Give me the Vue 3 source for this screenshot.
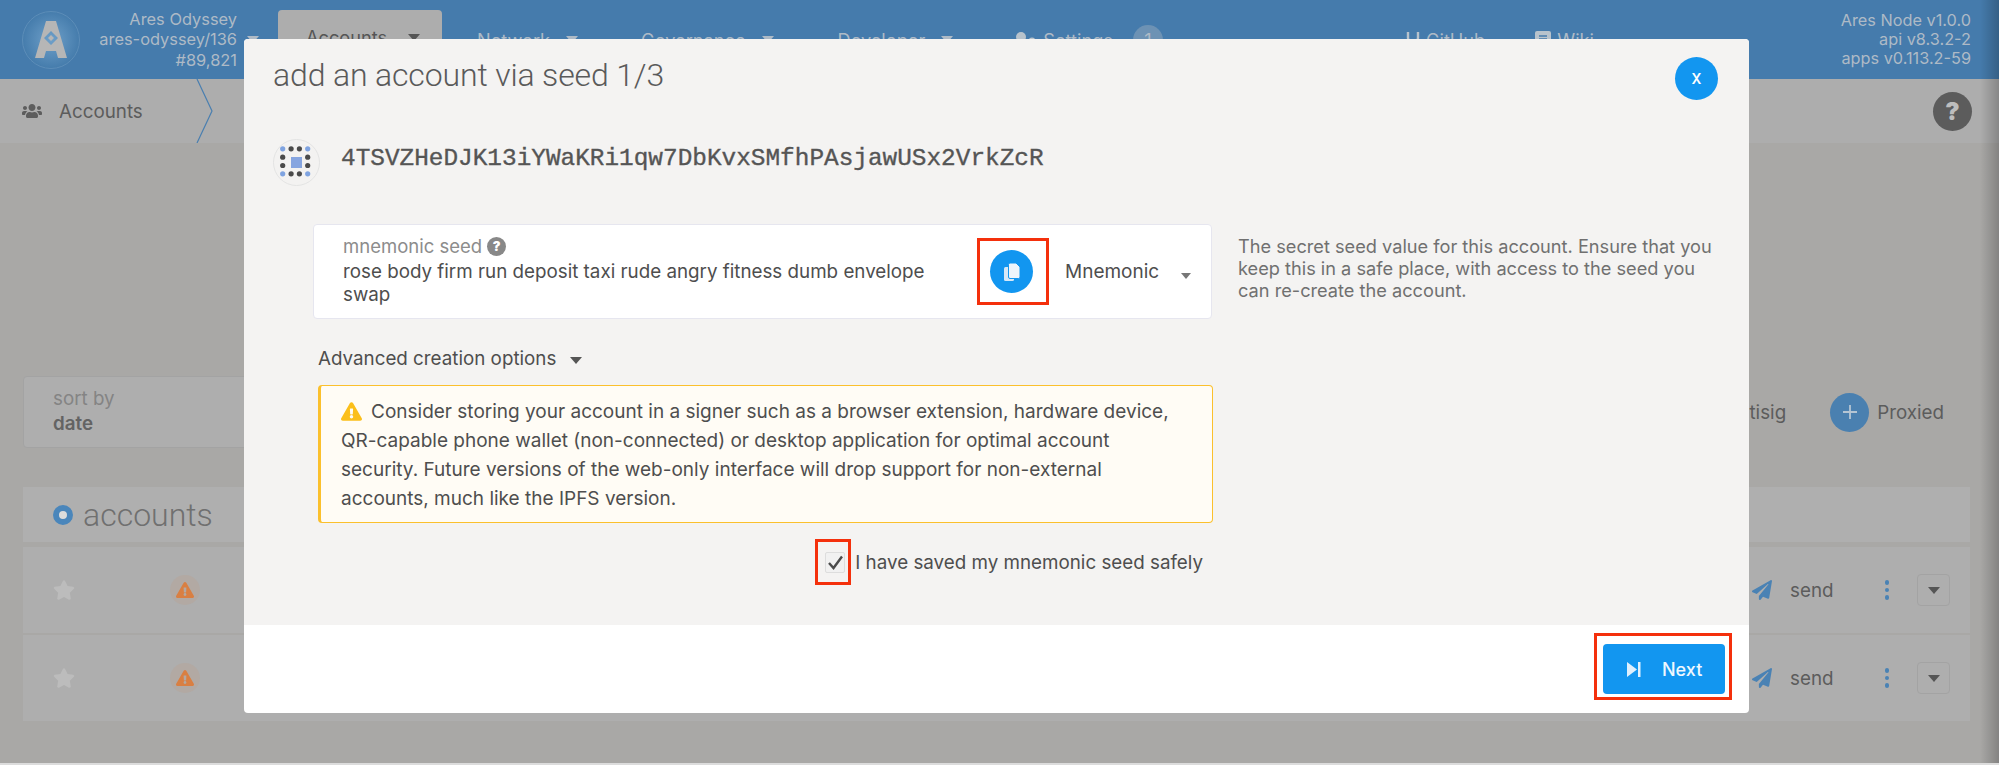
<script setup>
const navItems = [
  { label: 'Network', cls: 'n-network' },
  { label: 'Governance', cls: 'n-gov' },
  { label: 'Developer', cls: 'n-dev' },
]
const rows = [1, 2]
const pos = [0, 8.4, 16.7, 25]
const dots = []
pos.forEach((y, r) => pos.forEach((x, c) => {
  const edgeRow = r === 0 || r === 3
  const edgeCol = c === 0 || c === 3
  if (edgeRow || edgeCol) dots.push({ x: x + 9.5, y: y + 9.5, blue: edgeRow && edgeCol })
}))
const star = 'M259.3 17.8L194 150.2 47.9 171.5c-26.2 3.8-36.7 36.1-17.7 54.6l105.7 103-25 145.5c-4.5 26.3 23.2 46 46.4 33.7L288 439.6l130.7 68.7c23.2 12.2 50.9-7.4 46.4-33.7l-25-145.5 105.7-103c19-18.5 8.5-50.8-17.7-54.6L382 150.2 316.7 17.8c-11.7-23.6-45.6-24-57.4 0z'
const warn = 'M569.517 440.013C587.975 472.007 564.806 512 527.94 512H48.054c-36.937 0-59.999-40.055-41.577-71.987L246.423 23.985c18.467-32.009 64.72-31.951 83.154 0l239.94 416.028zM288 354c-25.405 0-46 20.595-46 46s20.595 46 46 46 46-20.595 46-46-20.595-46-46-46zm-43.673-165.346l7.418 136c.347 6.364 5.609 11.346 11.982 11.346h48.546c6.373 0 11.635-4.982 11.982-11.346l7.418-136c.375-6.874-5.098-12.654-11.982-12.654h-63.383c-6.884 0-12.356 5.78-11.981 12.654z'
const plane = 'M476 3.2L12.5 270.6c-18.1 10.4-15.8 35.6 2.2 43.2L121 358.4l287.3-253.2c5.5-4.9 13.3 2.6 8.6 8.3L176 407v80.5c0 23.6 28.5 32.9 42.5 15.8L282 426l124.6 52.2c14.2 6 30.4-2.9 33-18.2l72-432C515 7.8 493.3-6.8 476 3.2z'
const users = 'M96 224c35.3 0 64-28.7 64-64s-28.7-64-64-64-64 28.7-64 64 28.7 64 64 64zm448 0c35.3 0 64-28.7 64-64s-28.7-64-64-64-64 28.7-64 64 28.7 64 64 64zm32 32h-64c-17.6 0-33.5 7.1-45.1 18.6 40.3 22.1 68.9 62 75.1 109.4h66c17.7 0 32-14.3 32-32v-32c0-35.3-28.7-64-64-64zm-256 0c61.9 0 112-50.1 112-112S381.9 32 320 32 208 82.1 208 144s50.1 112 112 112zm76.8 32h-8.3c-20.8 10-43.9 16-68.5 16s-47.6-6-68.5-16h-8.3C179.6 288 128 339.6 128 403.2V432c0 26.5 21.5 48 48 48h288c26.5 0 48-21.5 48-48v-28.8c0-63.6-51.6-115.2-115.2-115.2zm-223.7-13.4C161.5 263.1 145.6 256 128 256H64c-35.3 0-64 28.7-64 64v32c0 17.7 14.3 32 32 32h65.9c6.3-47.4 34.9-87.3 75.2-109.4z'
</script>

<template>
  <div class="page">
    <header class="nav">
      <svg class="logo" viewBox="0 0 58 58">
        <defs>
          <radialGradient id="lg"><stop offset="0" stop-color="#6fa0c9" /><stop offset="1" stop-color="#457cac" /></radialGradient>
        </defs>
        <circle cx="29" cy="29" r="28.5" fill="url(#lg)" stroke="#5c8db8" />
        <path fill-rule="evenodd" d="M24 10h10l11 37h-9l-2-7H24l-2 7h-9zM29 20l-7 7 7 7 7-7z" fill="#b6b6b6" />
        <path d="M29 24l3 3-3 3-3-3z" fill="#b6b6b6" />
      </svg>
      <div class="chain">
        <div>Ares Odyssey</div>
        <div>ares-odyssey/136</div>
        <div>#89,821</div>
      </div>
      <i class="caret chain-caret"></i>
      <div class="tab"><span>Accounts</span><i class="caret dark"></i></div>
      <div v-for="n in navItems" :key="n.label" class="nav-item" :class="n.cls"><span>{{ n.label }}</span><i class="caret"></i></div>
      <div class="nav-item n-settings">
        <svg width="24" height="20" viewBox="0 0 24 20"><circle cx="7" cy="7" r="5" fill="#b8c3cc" /><circle cx="18" cy="11" r="3.5" fill="#b8c3cc" /></svg>
        <span>Settings</span>
        <b class="badge">1</b>
      </div>
      <div class="nav-item n-github">
        <svg width="14" height="22" viewBox="0 0 14 22"><path d="M2 3v6q0 4 5 4t5-4V3M7 13v8" fill="none" stroke="#b8c3cc" stroke-width="2.4" /></svg>
        <span>GitHub</span>
      </div>
      <div class="nav-item n-wiki">
        <svg width="16" height="22" viewBox="0 0 16 22"><rect x="0" y="2" width="16" height="20" rx="2" fill="#b8c3cc" /><path d="M4 7h8M4 10h8" stroke="#457cac" stroke-width="1.4" /></svg>
        <span>Wiki</span>
      </div>
      <div class="versions">
        <div>Ares Node v1.0.0</div>
        <div>api v8.3.2-2</div>
        <div>apps v0.113.2-59</div>
      </div>
    </header>

    <div class="subnav">
      <svg class="users" viewBox="0 0 640 512"><path :d="users" fill="#5d5d5d" /></svg>
      <span class="sub-label">Accounts</span>
      <svg class="chev" viewBox="0 0 18 64"><path d="M1 0l15 32L1 64" fill="none" stroke="#4a7fb0" stroke-width="1.2" /></svg>
      <div class="help">?</div>
    </div>

    <main class="content">
      <div class="tools">
        <div class="sort">
          <div class="sort-l">sort by</div>
          <div class="sort-v">date</div>
        </div>
        <div class="tools-right">
          <span class="multisig">Multisig</span>
          <span class="plus"><svg width="20" height="20" viewBox="0 0 20 20"><path d="M10 3v14M3 10h14" stroke="#b5c5d3" stroke-width="1.8" /></svg></span>
          <span class="proxied">Proxied</span>
        </div>
      </div>
      <section class="table">
        <div class="table-head">
          <span class="ring"></span>
          <h2>accounts</h2>
        </div>
        <div v-for="r in rows" :key="r" class="row">
          <svg class="star" viewBox="0 0 576 512"><path :d="star" fill="#bcbcbc" /></svg>
          <span class="warn-c"><svg width="18" height="16" viewBox="0 0 576 512"><path :d="warn" fill="#d97f42" /></svg></span>
          <svg class="plane" viewBox="0 0 512 512"><path :d="plane" fill="#4a82b4" /></svg>
          <span class="send">send</span>
          <span class="kebab"><i></i><i></i><i></i></span>
          <span class="more"><i class="caret dark"></i></span>
        </div>
      </section>
    </main>

    <div class="shade"></div>
    <div class="edge"></div>

    <div class="modal">
      <div class="modal-body">
        <h1>add an account via seed 1/3</h1>
        <button class="close">x</button>
        <div class="identity">
          <svg class="identicon" width="47" height="47" viewBox="0 0 47 47">
            <circle cx="23.5" cy="23.5" r="23" fill="#f3f2f1" stroke="#e3e3e3" />
            <circle v-for="(d, i) in dots" :key="i" :cx="d.x + 0.2" :cy="d.y + 0.3" r="2.6" :fill="d.blue ? '#7fa3e0' : '#4a4a4a'" />
            <rect x="18" y="18" width="11" height="11" fill="#86a5e0" />
          </svg>
          <span class="address">4TSVZHeDJK13iYWaKRi1qw7DbKvxSMfhPAsjawUSx2VrkZcR</span>
        </div>

        <div class="seed-row">
          <div class="card">
            <div class="seed-text">
              <div class="seed-label">mnemonic seed <span class="q">?</span></div>
              <div class="seed-value">rose body firm run deposit taxi rude angry fitness dumb envelope swap</div>
            </div>
            <div class="mark copy-mark">
              <span class="copy">
                <svg width="20" height="20" viewBox="0 0 20 20">
                  <rect x="2" y="5" width="10" height="14" rx="1.5" fill="#d7e8f7" />
                  <path d="M8 1h6l4 4v10a1.5 1.5 0 0 1-1.5 1.5h-8.500A1.500 1.500 0 0 1 6.500 15V2.500A1.500 1.500 0 0 1 8 1z" fill="#eef5fb" stroke="#1296f0" />
                </svg>
              </span>
            </div>
            <span class="mn">Mnemonic</span>
            <i class="caret grey"></i>
          </div>
          <p class="seed-help">The secret seed value for this account. Ensure that you keep this in a safe place, with access to the seed you can re-create the account.</p>
        </div>

        <div class="lower">
          <div class="advanced">Advanced creation options <i class="caret dark"></i></div>
          <div class="warning">
            <svg class="warn-i" width="21" height="19" viewBox="0 0 576 512"><path :d="warn" fill="#fbbf1a" /></svg>Consider storing your account in a signer such as a browser extension, hardware device, QR-capable phone wallet (non-connected) or desktop application for optimal account security. Future versions of the web-only interface will drop support for non-external accounts, much like the IPFS version.
          </div>
          <div class="confirm">
            <div class="mark check-mark">
              <span class="checkbox"><svg width="17" height="15" viewBox="0 0 17 15"><path d="M2 8l4.500 5L15 1.500" fill="none" stroke="#4b4b4b" stroke-width="2.400" /></svg></span>
            </div>
            <span class="confirm-text">I have saved my mnemonic seed safely</span>
          </div>
        </div>
      </div>
      <footer class="modal-foot">
        <div class="mark next-mark">
          <button class="next">
            <svg width="14" height="15" viewBox="0 0 14 15"><path d="M0 0l10 7.500L0 15z" fill="#dff0fd" /><rect x="11" y="0" width="2.500" height="15" fill="#dff0fd" /></svg>
            <span>Next</span>
          </button>
        </div>
      </footer>
    </div>
  </div>
</template>

<style>
html, body { margin: 0; overflow: hidden; background: #a9a8a6; }
</style>

<style scoped>
.page {
  position: relative;
  width: 1999px;
  height: 765px;
  overflow: hidden;
  background: #a9a8a6;
  color: #5c5c5c;
  font-family: Inter, "Liberation Sans", sans-serif;
  font-size: 18.800px;
}
.nav {
  height: 79px;
  background: #457bac;
  display: flex;
  align-items: center;
  color: #aebac6;
  font-size: 18.200px;
}
.logo { width: 58px; height: 58px; margin-left: 22px; flex: none; }
.chain {
  width: 157px;
  text-align: right;
  line-height: 20.500px;
  font-size: 16.400px;
  flex: none;
}
.caret {
  display: inline-block;
  width: 0;
  height: 0;
  border-left: 6px solid transparent;
  border-right: 6px solid transparent;
  border-top: 7px solid #aebac6;
}
.caret.dark { border-top-color: #555; }
.caret.grey { border-left-width: 5px; border-right-width: 5px; border-top: 6px solid #777; }
.chain-caret { margin-left: 10px; }
.tab {
  margin-left: 19px;
  align-self: flex-end;
  width: 164px;
  height: 69px;
  box-sizing: border-box;
  background: #adadad;
  border-radius: 4px 4px 0 0;
  display: flex;
  align-items: center;
  padding: 0 0 15px 28px;
  color: #555;
  gap: 21px;
  flex: none;
}
.nav-item { display: flex; align-items: center; gap: 16px; flex: none; }
.n-network { margin-left: 35px; }
.n-gov { margin-left: 63px; }
.n-dev { margin-left: 64px; }
.n-settings { margin-left: 61px; gap: 5px; }
.badge {
  width: 30px;
  height: 30px;
  border-radius: 50%;
  background: #6d92b4;
  margin-left: 15px;
  display: flex;
  align-items: center;
  justify-content: center;
  font-weight: 400;
}
.n-github { margin-left: 243px; gap: 6px; }
.n-wiki { margin-left: 50px; gap: 6px; }
.versions {
  margin-left: auto;
  margin-right: 28px;
  text-align: right;
  font-size: 16.300px;
  line-height: 19px;
}
.subnav {
  height: 64px;
  background: #adadad;
  display: flex;
  align-items: center;
}
.users { width: 20px; height: 16px; margin-left: 22px; }
.sub-label { margin-left: 17px; width: 85px; flex: none; }
.chev { width: 18px; height: 64px; margin-left: 52px; }
.help {
  margin-left: auto;
  margin-right: 27px;
  width: 39px;
  height: 39px;
  border-radius: 50%;
  background: #5c5c5c;
  color: #bdbdbd;
  font-weight: 900;
  font-size: 24px;
  display: flex;
  align-items: center;
  justify-content: center;
}
.content { padding: 233px 29px 0 23px; }
.tools { display: flex; justify-content: space-between; height: 72px; }
.sort {
  width: 300px;
  height: 72px;
  box-sizing: border-box;
  background: #aeaeae;
  border: 1px solid #a3a3a3;
  border-radius: 4px;
  padding: 9px 29px;
  line-height: 25px;
}
.sort-l { color: #848484; }
.sort-v { font-weight: 600; color: #636363; }
.tools-right { display: flex; align-items: center; }
.multisig { margin-right: 44px; }
.plus {
  width: 39px;
  height: 39px;
  border-radius: 50%;
  background: #4a80b0;
  display: flex;
  align-items: center;
  justify-content: center;
}
.proxied { margin-left: 8px; margin-right: 26px; }
.table { margin-top: 39px; }
.table-head {
  height: 55px;
  background: #afafaf;
  display: flex;
  align-items: center;
  padding-left: 30px;
  margin-bottom: 5px;
}
.ring {
  width: 20px;
  height: 20px;
  box-sizing: border-box;
  border-radius: 50%;
  border: 6px solid #4a86bb;
  background: #dcdcdc;
}
h2 {
  margin: 0 0 0 10px;
  font-weight: 300;
  font-family: Roboto, sans-serif;
  font-size: 32px;
  color: #707070;
}
.row {
  height: 86px;
  background: #aeaeae;
  margin-bottom: 2px;
  display: flex;
  align-items: center;
}
.star { width: 22px; height: 20px; margin-left: 30px; }
.warn-c {
  width: 30px;
  height: 30px;
  margin-left: 95px;
  border-radius: 50%;
  background: #b2a9a3;
  display: flex;
  align-items: center;
  justify-content: center;
}
.plane { width: 20px; height: 20px; margin-left: auto; }
.send { margin-left: 18px; }
.kebab { margin-left: 51px; display: flex; flex-direction: column; gap: 3px; }
.kebab i { width: 4.500px; height: 4.500px; border-radius: 50%; background: #4a82b4; }
.more {
  margin: 0 20px 0 28px;
  width: 33px;
  height: 32px;
  box-sizing: border-box;
  border: 1px solid #a3a3a3;
  border-radius: 4px;
  display: flex;
  align-items: center;
  justify-content: center;
}
.shade {
  position: absolute;
  right: 0;
  top: 0;
  bottom: 0;
  width: 19px;
  background: linear-gradient(90deg, rgba(0,0,0,0), rgba(0,0,0,.22));
}
.edge { position: absolute; left: 0; right: 0; bottom: 0; height: 2px; background: #dcdcdc; }

.modal {
  position: absolute;
  left: 244px;
  top: 39px;
  width: 1505px;
  height: 674px;
  border-radius: 4px;
  overflow: hidden;
  background: #fff;
  display: flex;
  flex-direction: column;
  color: #4e4e4e;
}
.modal-body {
  position: relative;
  height: 586px;
  box-sizing: border-box;
  background: #f4f3f2;
  padding: 16px 0 0 29px;
}
h1 {
  margin: 0;
  font-family: Roboto, sans-serif;
  font-weight: 300;
  font-size: 32px;
  letter-spacing: -0.150px;
  line-height: 40px;
  color: #5a5a5a;
}
.close {
  position: absolute;
  left: 1431px;
  top: 18px;
  width: 43px;
  height: 43px;
  padding: 0 0 3px;
  border: 0;
  border-radius: 50%;
  background: #1296f0;
  color: #fff;
  font: 400 20px Roboto, sans-serif;
}
.identity { display: flex; align-items: center; margin-top: 44px; gap: 21px; height: 47px; }
.address {
  font-family: "Liberation Mono", monospace;
  font-size: 24.400px;
  color: #555;
  font-weight: 400;
  -webkit-text-stroke: 0.350px #555;
  margin-top: -9px;
}
.seed-row { display: flex; margin: 38px 0 0 40px; }
.card {
  width: 899px;
  height: 95px;
  box-sizing: border-box;
  background: #fff;
  border: 1px solid #e6e6ef;
  border-radius: 4px;
  display: flex;
  align-items: center;
  flex: none;
}
.seed-text { width: 605px; margin: 0 29px; flex: none; align-self: flex-start; padding-top: 10px; }
.seed-label { color: #8c8c8c; line-height: 22px; font-size: 18.500px; display: flex; align-items: center; gap: 5px; }
.q {
  width: 19px;
  height: 19px;
  border-radius: 50%;
  background: #888;
  color: #fff;
  font-size: 13px;
  font-weight: 900;
  display: flex;
  align-items: center;
  justify-content: center;
}
.seed-value { line-height: 23px; margin-top: 3px; }
.mark { border: 3px solid #f4300c; box-sizing: border-box; flex: none; }
.copy-mark { width: 72px; height: 67px; padding: 9px 0 0 10px; }
.copy {
  width: 43px;
  height: 43px;
  border-radius: 50%;
  background: #1296f0;
  display: flex;
  align-items: center;
  justify-content: center;
}
.mn { margin-left: 16px; font-size: 19px; }
.card .caret { margin: 8px 0 0 22px; }
.seed-help {
  margin: 11px 0 0 26px;
  width: 480px;
  color: #707070;
  font-size: 18.200px;
  line-height: 22px;
}
.lower { margin: 28px 0 0 45px; width: 895px; }
.advanced {
  line-height: 24px;
  display: flex;
  align-items: center;
  gap: 14px;
}
.advanced .caret { margin-top: 2px; }
.warning {
  margin-top: 14px;
  height: 138px;
  box-sizing: border-box;
  background: #fffcf5;
  border: 1px solid #fbc02d;
  border-left-width: 3px;
  border-radius: 4px;
  padding: 11px 36px 0 20px;
  line-height: 29px;
  font-size: 19px;
}
.warn-i { margin-right: 9px; vertical-align: -3px; }
.confirm { display: flex; align-items: center; justify-content: flex-end; margin-top: 16px; padding-right: 10px; }
.check-mark { width: 36px; height: 46px; padding: 10px 0 0 7px; }
.checkbox {
  display: flex;
  align-items: center;
  justify-content: center;
  width: 20px;
  height: 21px;
  box-sizing: border-box;
  border: 1px solid #ddd;
  background: #f1f1f1;
  border-radius: 2px;
}
.confirm-text { margin-left: 4px; }
.modal-foot {
  height: 88px;
  display: flex;
  justify-content: flex-end;
  align-items: flex-start;
  padding: 8px 17px 0 0;
  box-sizing: border-box;
}
.next-mark { width: 138px; height: 67px; padding: 8px 0 0 6px; }
.next {
  width: 122px;
  height: 50px;
  border: 0;
  border-radius: 4px;
  background: #1296f0;
  color: #eef7fe;
  display: flex;
  align-items: center;
  padding: 0 0 0 24px;
  gap: 21px;
  font: 500 18px Inter, sans-serif;
}
</style>
